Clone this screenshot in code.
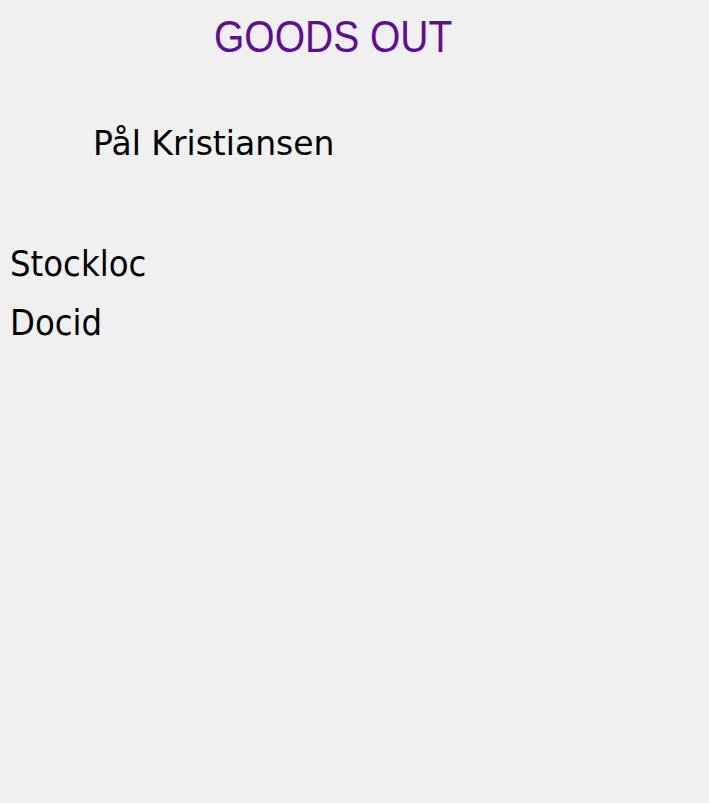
export default function App() {
  return (
    <div className="min-h-[803px] w-full bg-[#f0f0f0] pt-[17px]">
      <h1 className="ml-[214px] origin-center scale-y-115 font-['Liberation_Sans',Arial,sans-serif] text-[39px] leading-none font-normal text-[#5c0f96]">
        GOODS OUT
      </h1>
      <div className="mt-[71px] ml-[93px] font-['DejaVu_Sans',Verdana,sans-serif] text-[33px] leading-none text-black">
        Pål Kristiansen
      </div>
      <div className="mt-[74px] ml-[10px] font-['DejaVu_Sans_Condensed','DejaVu_Sans',Tahoma,sans-serif] text-[36px] leading-[59px] text-black [font-stretch:condensed]">
        <div>Stockloc</div>
        <div>Docid</div>
      </div>
    </div>
  );
}
